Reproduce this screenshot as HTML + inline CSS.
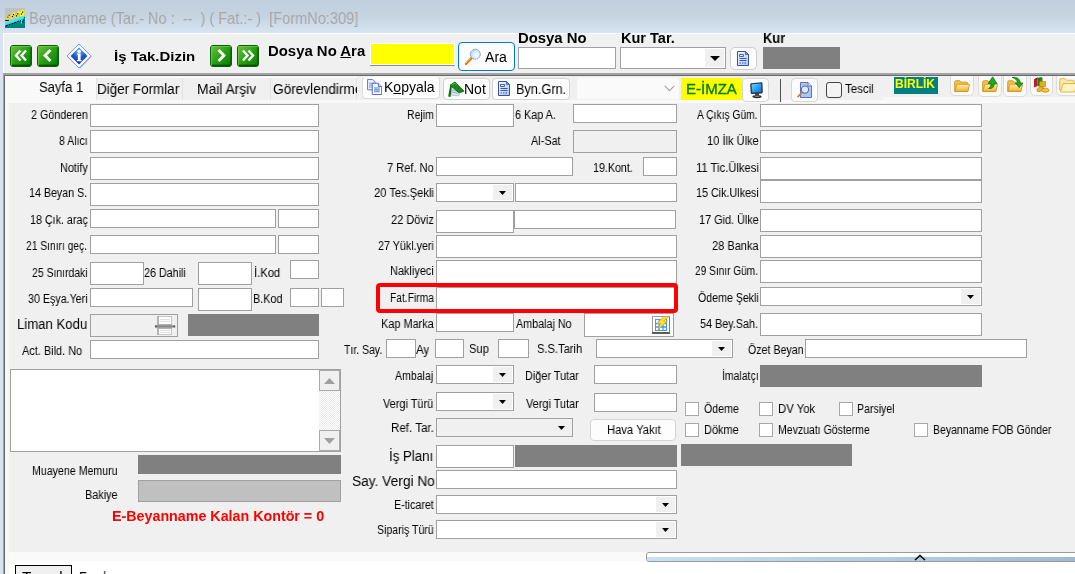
<!DOCTYPE html>
<html lang="tr"><head><meta charset="utf-8"><title>Beyanname</title><style>
html,body{margin:0;padding:0;}
body{width:1075px;height:574px;overflow:hidden;position:relative;background:#f0f0f0;font-family:"Liberation Sans", sans-serif;}
.b{position:absolute;box-sizing:border-box;}
.r{position:absolute;}
.t{position:absolute;white-space:nowrap;transform-origin:0 0;will-change:transform;}
u{text-decoration:underline;}
</style></head><body>
<div class="r" style="left:0px;top:0px;width:1075px;height:33px;background:linear-gradient(#c1cfde 0%,#c5d3e1 45%,#d7e4f1 100%);"></div>
<div class="r" style="left:0px;top:33px;width:3px;height:541px;background:#d7e3f1;"></div>
<div class="r" style="left:3px;top:33px;width:1072px;height:1px;background:#ffffff;"></div>
<div class="r" style="left:3px;top:33px;width:1px;height:40px;background:#ffffff;"></div>
<svg class="r" style="left:5px;top:8px" width="20" height="20" viewBox="0 0 20 20">
<rect width="20" height="20" fill="#c0c0c0"/>
<path d="M0 15.4L20 7.7V20H0Z" fill="#00ffff"/>
<path d="M0 17.5L15.8 12V15.5L17.2 15.8V11.5L20 10.6V20H0Z" fill="#008080"/>
<path d="M.6 11.8L3.4 6.6H5.6L3.2 11.6Z M5.2 10.6L8 4.4H10.4L7.4 11Z M10 9.6L13 3.2H15.4L12.2 9.8Z M14.6 8L15.8 3Q16.4 1.6 18 1.8L19.4 2.6V7L17.4 8.6Z" fill="#ffff00"/>
<path d="M.2 12.4H3.8" stroke="#000" stroke-width="1"/>
<path d="M2.6 9.8L4.8 6.2M7 9.2L9.2 5.4M11.4 8.4L13.6 4.4M16.2 6.6L18.2 3.2" stroke="#000" stroke-width="1.1" stroke-dasharray="1.3 1"/>
<path d="M1 17.8L16 12.4" stroke="#000" stroke-width="1" stroke-dasharray="1.6 1.4"/>
<path d="M17.4 14.6L19.6 9.4" stroke="#000" stroke-width="1.1" stroke-dasharray="1.4 1"/>
</svg>
<svg class="r" style="left:10px;top:45px" width="22" height="22" viewBox="0 0 22 22">
<defs><linearGradient id="gll" x1="0" y1="0" x2="1" y2="1"><stop offset="0" stop-color="#6cc63c"/><stop offset=".5" stop-color="#2a9f14"/><stop offset="1" stop-color="#067a06"/></linearGradient></defs>
<rect x=".5" y=".5" width="21" height="21" rx="2.5" fill="url(#gll)" stroke="#0b5f0b"/>
<path d="M1.5 20.5V2.5Q1.5 1.5 2.5 1.5H20.5" stroke="#7fd45a" stroke-opacity=".6" fill="none"/>
<path d="M2 20.3H20" stroke="#024602" stroke-opacity=".75" stroke-width="1.4"/><path d="M20.4 3V20" stroke="#045804" stroke-opacity=".6"/>
<path d="M10.5 6L6 11L10.5 16 M16 6L11.5 11L16 16" stroke="#fff" stroke-width="2.4" fill="none" stroke-linejoin="miter" transform="translate(0 -.5)"/>
</svg>
<svg class="r" style="left:37px;top:45px" width="22" height="22" viewBox="0 0 22 22">
<defs><linearGradient id="gl" x1="0" y1="0" x2="1" y2="1"><stop offset="0" stop-color="#6cc63c"/><stop offset=".5" stop-color="#2a9f14"/><stop offset="1" stop-color="#067a06"/></linearGradient></defs>
<rect x=".5" y=".5" width="21" height="21" rx="2.5" fill="url(#gl)" stroke="#0b5f0b"/>
<path d="M1.5 20.5V2.5Q1.5 1.5 2.5 1.5H20.5" stroke="#7fd45a" stroke-opacity=".6" fill="none"/>
<path d="M2 20.3H20" stroke="#024602" stroke-opacity=".75" stroke-width="1.4"/><path d="M20.4 3V20" stroke="#045804" stroke-opacity=".6"/>
<path d="M13.5 5.5L8 11L13.5 16.5" stroke="#fff" stroke-width="2.8" fill="none" stroke-linejoin="miter" transform="translate(0 -.5)"/>
</svg>
<svg class="r" style="left:210px;top:45px" width="22" height="22" viewBox="0 0 22 22">
<defs><linearGradient id="gr" x1="0" y1="0" x2="1" y2="1"><stop offset="0" stop-color="#6cc63c"/><stop offset=".5" stop-color="#2a9f14"/><stop offset="1" stop-color="#067a06"/></linearGradient></defs>
<rect x=".5" y=".5" width="21" height="21" rx="2.5" fill="url(#gr)" stroke="#0b5f0b"/>
<path d="M1.5 20.5V2.5Q1.5 1.5 2.5 1.5H20.5" stroke="#7fd45a" stroke-opacity=".6" fill="none"/>
<path d="M2 20.3H20" stroke="#024602" stroke-opacity=".75" stroke-width="1.4"/><path d="M20.4 3V20" stroke="#045804" stroke-opacity=".6"/>
<path d="M8.5 5.5L14 11L8.5 16.5" stroke="#fff" stroke-width="2.8" fill="none" stroke-linejoin="miter" transform="translate(0 -.5)"/>
</svg>
<svg class="r" style="left:237px;top:45px" width="22" height="22" viewBox="0 0 22 22">
<defs><linearGradient id="grr" x1="0" y1="0" x2="1" y2="1"><stop offset="0" stop-color="#6cc63c"/><stop offset=".5" stop-color="#2a9f14"/><stop offset="1" stop-color="#067a06"/></linearGradient></defs>
<rect x=".5" y=".5" width="21" height="21" rx="2.5" fill="url(#grr)" stroke="#0b5f0b"/>
<path d="M1.5 20.5V2.5Q1.5 1.5 2.5 1.5H20.5" stroke="#7fd45a" stroke-opacity=".6" fill="none"/>
<path d="M2 20.3H20" stroke="#024602" stroke-opacity=".75" stroke-width="1.4"/><path d="M20.4 3V20" stroke="#045804" stroke-opacity=".6"/>
<path d="M6 6L10.5 11L6 16 M11.5 6L16 11L11.5 16" stroke="#fff" stroke-width="2.4" fill="none" stroke-linejoin="miter" transform="translate(0 -.5)"/>
</svg>
<svg class="r" style="left:66px;top:43px" width="26" height="26" viewBox="0 0 26 26">
<defs><radialGradient id="gi" cx=".5" cy=".25" r=".75"><stop offset="0" stop-color="#6fb4fa"/><stop offset=".45" stop-color="#1f5fd0"/><stop offset="1" stop-color="#0a2c96"/></radialGradient></defs>
<path d="M13 1.4L24.9 13.2L13.4 24.9L1.6 13.2Z" fill="#b9b9c4" transform="translate(.7 .9)"/>
<path d="M13 .9L25.1 13L13 25.1L.9 13Z" fill="#ffffff" stroke="#6d8ad8" stroke-width=".9"/>
<path d="M13 4.6L21.4 13L13 21.4L4.6 13Z" fill="url(#gi)"/>
<circle cx="13.1" cy="8.2" r="1.75" fill="#fff"/><path d="M10.9 10.6H14.6V17H15.6V18.2H10.9V17H11.9V11.8H10.9Z" fill="#fff"/>
</svg>
<div class="r" style="left:370px;top:43px;width:85px;height:22px;background:#ffffff;"></div>
<div class="r" style="left:371px;top:44px;width:83px;height:20px;background:#ffff00;"></div>
<div class="r" style="left:370px;top:65px;width:85px;height:1px;background:#8e8e8e;"></div>
<div class="b" style="left:458px;top:42px;width:57px;height:29px;background:#fdfdfd;border:1px solid #0078d7;border-radius:4px;"></div>
<svg class="r" style="left:464px;top:47px" width="19" height="19" viewBox="0 0 19 19">
<defs><radialGradient id="glens" cx=".6" cy=".6" r=".7"><stop offset="0" stop-color="#ffffff"/><stop offset=".6" stop-color="#cfe8fb"/><stop offset="1" stop-color="#8fc4f0"/></radialGradient></defs>
<path d="M2 16.8L7.4 11.2" stroke="#e07808" stroke-width="2.4" stroke-linecap="round"/>
<path d="M1.8 16.2L6.8 11" stroke="#ffb050" stroke-width=".9" stroke-linecap="round"/>
<circle cx="11.3" cy="7.2" r="5" fill="url(#glens)" stroke="#8a8ec8" stroke-width="1" stroke-dasharray="1.6 .7"/>
</svg>
<div class="b" style="left:518px;top:47px;width:98px;height:22px;background:#fff;border:1px solid #a0a0a0;"></div>
<div class="b" style="left:620px;top:47px;width:106px;height:22px;background:#fff;border:1px solid #a0a0a0;"></div>
<div class="r" style="left:705px;top:49px;width:19px;height:18px;background:#f0f0f0;"></div>
<svg class="r" style="left:709.5px;top:56.0px" width="10" height="5" viewBox="0 0 10 5"><path d="M0 0H10L5.0 5Z" fill="#000"/></svg>
<div class="b" style="left:730px;top:47px;width:27px;height:23px;background:#fcfcfc;border:1px solid #cfcfcf;border-radius:5px;"></div>
<svg class="r" style="left:737px;top:51px" width="12" height="15" viewBox="0 0 12 15">
<defs><linearGradient id="gdoc" x1="0" y1="0" x2="1" y2="1"><stop offset="0" stop-color="#f2f8ff"/><stop offset=".5" stop-color="#cfe4fb"/><stop offset="1" stop-color="#9ccaf6"/></linearGradient></defs>
<path d="M.5 .5H8.5L11.5 3.5V14.5H.5Z" fill="url(#gdoc)" stroke="#3f4f9e"/>
<path d="M8.5 .5V3.5H11.5Z" fill="#5aa8f0" stroke="#3f4f9e" stroke-width=".8"/>
<path d="M2.5 3.5H6.5V5.5H2.5Z" fill="none" stroke="#3b50a8" stroke-width=".9"/>
<path d="M2.5 7.5H9.5M2.5 9.5H9.5" stroke="#3b50a8"/><path d="M2.5 12H9.5" stroke="#3b50a8" stroke-dasharray="1.5 1"/>
</svg>
<div class="r" style="left:763px;top:47px;width:77px;height:22px;background:#808080;"></div>
<div class="r" style="left:3px;top:73px;width:1072px;height:2px;background:#a3a3a3;"></div>
<div class="r" style="left:4px;top:75px;width:1071px;height:1px;background:#696969;"></div>
<div class="r" style="left:3px;top:73px;width:1px;height:501px;background:#a3a3a3;"></div>
<div class="r" style="left:4px;top:75px;width:1px;height:499px;background:#696969;"></div>
<div class="r" style="left:5px;top:76px;width:4px;height:498px;background:#f8f8f8;"></div>
<div class="r" style="left:5px;top:76px;width:352px;height:24px;background:#f9f9f9;"></div>
<div class="r" style="left:5px;top:100px;width:1070px;height:3px;background:#f9f9f9;"></div>
<div class="r" style="left:883px;top:97px;width:192px;height:3px;background:#f8f8f8;"></div>
<div class="r" style="left:96px;top:78px;width:86px;height:22px;background:#f0f0f0;border-left:1px solid #e3e3e3;box-sizing:border-box;"></div>
<div class="r" style="left:182px;top:78px;width:88px;height:22px;background:#f0f0f0;border-left:1px solid #e3e3e3;box-sizing:border-box;"></div>
<div class="r" style="left:270px;top:78px;width:86px;height:22px;background:#f0f0f0;border-left:1px solid #e3e3e3;box-sizing:border-box;"></div>
<div class="r" style="left:356px;top:78px;width:1px;height:22px;background:#e3e3e3;"></div>
<div class="b" style="left:362px;top:76px;width:78px;height:23px;background:#fdfdfd;border:1px solid #dcdcdc;border-radius:4px;border-top-color:#f4f4f4;"></div>
<svg class="r" style="left:367px;top:79px" width="15.2" height="16" viewBox="0 0 16 17">
<path d="M.5 .5H6L8.5 3V11.5H.5Z" fill="#e6effc" stroke="#5a72c0"/>
<path d="M2 4.5H7M2 6.5H7M2 8.5H7" stroke="#7d9be0"/>
<path d="M5.5 4.5H12L15.5 8V16.5H5.5Z" fill="#fff" stroke="#4a62b8"/>
<path d="M12 4.5V8H15.5" fill="#dbe6fa" stroke="#4a62b8"/>
<path d="M7.5 9.5H13.5M7.5 11.5H13.5M7.5 13.5H13.5" stroke="#3f7fe8" stroke-width="1.2"/>
</svg>
<div class="b" style="left:443px;top:78px;width:47px;height:22px;background:#fdfdfd;border:1px solid #d2d2d2;border-radius:4px;"></div>
<svg class="r" style="left:447px;top:81px" width="18" height="17" viewBox="0 0 18 17">
<path d="M4 6L12 8V15L4 14Z" fill="#dbe7f5" stroke="#9fb4cc" stroke-width=".7"/>
<path d="M5 9L11 10.3M5 11L11 12.3" stroke="#7fa0d0" stroke-width=".8"/>
<path d="M1.2 15.5L3.2 4.5L4.8 5L3.6 16Z" fill="#0d6a0d"/>
<path d="M3 4.2L8 1L17 10.2L12 11.8Z" fill="#138a13" stroke="#0a5c0a" stroke-width=".8"/>
<path d="M4.5 4.4L8 2.2L10 4.2" stroke="#56c040" stroke-width=".9" fill="none"/>
</svg>
<div class="b" style="left:492px;top:78px;width:78px;height:22px;background:#fdfdfd;border:1px solid #d2d2d2;border-radius:4px;"></div>
<svg class="r" style="left:498px;top:81px" width="12" height="15" viewBox="0 0 12 15">
<defs><linearGradient id="gdoc" x1="0" y1="0" x2="1" y2="1"><stop offset="0" stop-color="#f2f8ff"/><stop offset=".5" stop-color="#cfe4fb"/><stop offset="1" stop-color="#9ccaf6"/></linearGradient></defs>
<path d="M.5 .5H8.5L11.5 3.5V14.5H.5Z" fill="url(#gdoc)" stroke="#3f4f9e"/>
<path d="M8.5 .5V3.5H11.5Z" fill="#5aa8f0" stroke="#3f4f9e" stroke-width=".8"/>
<path d="M2.5 3.5H6.5V5.5H2.5Z" fill="none" stroke="#3b50a8" stroke-width=".9"/>
<path d="M2.5 7.5H9.5M2.5 9.5H9.5" stroke="#3b50a8"/><path d="M2.5 12H9.5" stroke="#3b50a8" stroke-dasharray="1.5 1"/>
</svg>
<div class="b" style="left:576px;top:77px;width:104px;height:23px;background:#fafafa;border:1px solid #f0f0f0;"></div>
<svg class="r" style="left:664px;top:85px" width="11" height="7" viewBox="0 0 11 7"><path d="M.7 .8L5.5 5.6L10.3 .8" stroke="#a6a6a6" stroke-width="1.1" fill="none"/></svg>
<div class="r" style="left:681px;top:78px;width:61px;height:22px;background:#ffff00;"></div>
<div class="b" style="left:742px;top:78px;width:27px;height:24px;background:#fcfcfc;border:1px solid #d6d6d6;border-radius:4px;"></div>
<svg class="r" style="left:749px;top:82px" width="15" height="17" viewBox="0 0 15 17">
<defs><linearGradient id="gmon" x1="0" y1="0" x2="1" y2="1"><stop offset="0" stop-color="#6fd2ff"/><stop offset=".5" stop-color="#2aa4f8"/><stop offset="1" stop-color="#0c6edc"/></linearGradient></defs>
<ellipse cx="8" cy="14.6" rx="4.6" ry="1.7" fill="#2c2c2c"/><ellipse cx="8" cy="14.2" rx="2.6" ry=".8" fill="#8a8a8a"/>
<path d="M6 10.5H10V14H6Z" fill="#4a4a4a"/>
<path d="M1.2 2.6Q1 1.4 2.2 1.2L12 .3Q13.4 .2 13.5 1.5L13.8 10Q13.8 11.3 12.6 11.4L3 12Q1.8 12 1.7 10.8Z" fill="#33363c"/>
<path d="M2.6 3Q2.5 2.4 3.2 2.3L11.4 1.6Q12.1 1.6 12.2 2.2L12.4 9.3Q12.4 9.9 11.8 10L3.7 10.5Q3 10.5 3 9.9Z" fill="url(#gmon)"/>
</svg>
<div class="r" style="left:780px;top:79px;width:1px;height:23px;background:#505050;"></div>
<div class="b" style="left:791px;top:78px;width:27px;height:24px;background:#fcfcfc;border:1px solid #d6d6d6;border-radius:4px;"></div>
<svg class="r" style="left:797px;top:82px" width="16" height="16" viewBox="0 0 16 16">
<path d="M3.5 .5H11L14.5 4V15.5H3.5Z" fill="#a9c6f5" stroke="#5a6fd0"/>
<path d="M11 .5V4H14.5" fill="#e8f0fd" stroke="#5a6fd0"/>
<path d="M1 14.6L5.2 10.4" stroke="#d08020" stroke-width="1.8" stroke-linecap="round"/>
<circle cx="8" cy="7.6" r="3.6" fill="#e9f2fd" fill-opacity=".85" stroke="#5f6f98" stroke-width="1.1"/>
</svg>
<div class="b" style="left:826px;top:82px;width:16px;height:16px;background:#f4f4f4;border:1px solid #444;border-radius:3px;"></div>
<div class="r" style="left:894px;top:77px;width:44px;height:17px;background:#008080;"></div>
<div class="b" style="left:950px;top:66px;width:24px;height:30px;background:#fafafa;border:1px solid #dcdcdc;border-radius:5px;"></div>
<svg class="r" style="left:954px;top:80px;overflow:visible" width="16" height="12" viewBox="0 0 16 12"><defs><linearGradient id="gf" x1="0" y1="0" x2="0" y2="1"><stop offset="0" stop-color="#fdf0b8"/><stop offset="1" stop-color="#f0b432"/></linearGradient></defs>
<path d="M.7 11.3V2.2Q.7 .7 2.2 .7H5.8L7.2 2.2H12.6Q13.8 2.2 13.8 3.6V11.3Z" fill="#f3c24a" stroke="#d49416" stroke-width=".9"/>
<path d="M.9 11.4L2.6 4.8Q2.8 4.2 3.6 4.2H14.8Q15.6 4.2 15.4 5L13.8 11.4Z" fill="url(#gf)" stroke="#d49416" stroke-width=".9"/></svg>
<div class="b" style="left:978px;top:66px;width:24px;height:31px;background:#fafafa;border:1px solid #dcdcdc;border-radius:5px;"></div>
<svg class="r" style="left:982px;top:80px;overflow:visible" width="16" height="12" viewBox="0 0 16 12"><defs><linearGradient id="gf" x1="0" y1="0" x2="0" y2="1"><stop offset="0" stop-color="#fdf0b8"/><stop offset="1" stop-color="#f0b432"/></linearGradient></defs>
<path d="M.7 11.3V2.2Q.7 .7 2.2 .7H5.8L7.2 2.2H12.6Q13.8 2.2 13.8 3.6V11.3Z" fill="#f3c24a" stroke="#d49416" stroke-width=".9"/>
<path d="M.9 11.4L2.6 4.8Q2.8 4.2 3.6 4.2H14.8Q15.6 4.2 15.4 5L13.8 11.4Z" fill="url(#gf)" stroke="#d49416" stroke-width=".9"/><path d="M6.5 8.5Q9.5 7.5 9 3.5H6.2L10.6 -3.2L15 3.5H12.2Q12.4 9 6.5 8.5Z" fill="#1faa1f" stroke="#0b6e0b" stroke-width=".7"/></svg>
<div class="b" style="left:1003px;top:66px;width:24px;height:31px;background:#fafafa;border:1px solid #dcdcdc;border-radius:5px;"></div>
<svg class="r" style="left:1007px;top:80px;overflow:visible" width="16" height="12" viewBox="0 0 16 12"><defs><linearGradient id="gf" x1="0" y1="0" x2="0" y2="1"><stop offset="0" stop-color="#fdf0b8"/><stop offset="1" stop-color="#f0b432"/></linearGradient></defs>
<path d="M.7 11.3V2.2Q.7 .7 2.2 .7H5.8L7.2 2.2H12.6Q13.8 2.2 13.8 3.6V11.3Z" fill="#f3c24a" stroke="#d49416" stroke-width=".9"/>
<path d="M.9 11.4L2.6 4.8Q2.8 4.2 3.6 4.2H14.8Q15.6 4.2 15.4 5L13.8 11.4Z" fill="url(#gf)" stroke="#d49416" stroke-width=".9"/><path d="M5 -2.6Q12.6 -3.6 13.4 3H16L12.2 7.6L8.4 3H10.8Q10 -1.4 5 -2.6Z" fill="#1faa1f" stroke="#0b6e0b" stroke-width=".7"/></svg>
<div class="b" style="left:1030px;top:66px;width:23px;height:30px;background:#fafafa;border:1px solid #dcdcdc;border-radius:5px;"></div>
<svg class="r" style="left:1033px;top:77px" width="17" height="16" viewBox="0 0 17 16">
<path d="M1 2.5L4.5 .5V9L1 10.5Z" fill="#c81818"/><path d="M1 2.5L4.5 .5V2.5Z" fill="#8a0c0c"/>
<path d="M4.5 .8L8.5 0L9.5 1V8.5L4.5 9.5Z" fill="#1c8c1c"/><path d="M6 1V9" stroke="#0c5c0c" stroke-width=".7"/>
<path d="M6.5 4.5H12.5V9.5H6.5Z" fill="#e9a820" stroke="#b47a0c" stroke-width=".6"/>
<ellipse cx="7.2" cy="12.2" rx="3.6" ry="1.9" fill="#f2b828" stroke="#a8700a" stroke-width=".6" transform="rotate(-28 7.2 12.2)"/>
<ellipse cx="12.3" cy="13.2" rx="3.8" ry="2" fill="#f6c838" stroke="#a8700a" stroke-width=".6"/>
</svg>
<div class="b" style="left:1056px;top:66px;width:25px;height:30px;background:#fafafa;border:1px solid #dcdcdc;border-radius:5px;"></div>
<svg class="r" style="left:1059px;top:78px" width="18" height="15" viewBox="0 0 18 15">
<path d="M.7 12V2.2Q.7 .7 2.2 .7H6L7.5 2.2H14Q15.2 2.2 15.2 3.6V12Z" fill="#fbe9a4" stroke="#e0b040" stroke-width=".9"/>
<path d="M1.5 14L4 5.5H18L15.5 14Z" fill="#fdf3c4" stroke="#e0b040" stroke-width=".9"/>
</svg>
<div class="r" style="left:940px;top:60px;width:135px;height:13px;background:#f0f0f0;"></div>
<div class="r" style="left:940px;top:73px;width:135px;height:2px;background:#a3a3a3;"></div>
<div class="r" style="left:940px;top:75px;width:135px;height:1px;background:#696969;"></div>
<div class="b" style="left:90px;top:104px;width:229px;height:23px;background:#fff;border:1px solid #a0a0a0;"></div>
<div class="b" style="left:90px;top:130px;width:229px;height:23px;background:#fff;border:1px solid #a0a0a0;"></div>
<div class="b" style="left:90px;top:157px;width:229px;height:23px;background:#fff;border:1px solid #a0a0a0;"></div>
<div class="b" style="left:90px;top:183px;width:229px;height:23px;background:#fff;border:1px solid #a0a0a0;"></div>
<div class="b" style="left:90px;top:209px;width:186px;height:19px;background:#fff;border:1px solid #a0a0a0;"></div>
<div class="b" style="left:278px;top:209px;width:41px;height:19px;background:#fff;border:1px solid #a0a0a0;"></div>
<div class="b" style="left:90px;top:235px;width:186px;height:19px;background:#fff;border:1px solid #a0a0a0;"></div>
<div class="b" style="left:278px;top:235px;width:41px;height:19px;background:#fff;border:1px solid #a0a0a0;"></div>
<div class="b" style="left:90px;top:262px;width:54px;height:23px;background:#fff;border:1px solid #a0a0a0;"></div>
<div class="b" style="left:198px;top:262px;width:54px;height:23px;background:#fff;border:1px solid #a0a0a0;"></div>
<div class="b" style="left:290px;top:260px;width:29px;height:19px;background:#fff;border:1px solid #a0a0a0;"></div>
<div class="b" style="left:90px;top:288px;width:103px;height:19px;background:#fff;border:1px solid #a0a0a0;"></div>
<div class="b" style="left:198px;top:288px;width:54px;height:23px;background:#fff;border:1px solid #a0a0a0;"></div>
<div class="b" style="left:290px;top:288px;width:29px;height:19px;background:#fff;border:1px solid #a0a0a0;"></div>
<div class="b" style="left:321px;top:288px;width:23px;height:19px;background:#fff;border:1px solid #a0a0a0;"></div>
<div class="b" style="left:90px;top:314px;width:88px;height:23px;background:#f0f0f0;border:1px solid #a0a0a0;"></div>
<svg class="r" style="left:154px;top:316px" width="22" height="19" viewBox="0 0 22 19">
<rect x="3.5" y=".5" width="14" height="18" fill="#fbfbfb" stroke="#c6c6c6"/>
<path d="M4 0V19" stroke="#b2b2b2" stroke-width="2"/>
<path d="M6 3.5H16M6 5.5H16M6 14.5H16M6 16.5H16" stroke="#e2e2e2"/>
<rect x="3" y="8" width="15" height="5" fill="#b0b0b0"/>
<rect x="2" y="9.3" width="18" height="2.2" fill="#8c8c8c"/>
<rect x="1" y="9.3" width="1.6" height="2.2" fill="#555"/><rect x="19.6" y="9.3" width="1.6" height="2.2" fill="#555"/>
</svg>
<div class="r" style="left:188px;top:314px;width:131px;height:22px;background:#808080;"></div>
<div class="b" style="left:90px;top:340px;width:229px;height:19px;background:#fff;border:1px solid #a0a0a0;"></div>
<div class="b" style="left:10px;top:369px;width:331px;height:83px;background:#fff;border:1px solid #a0a0a0;"></div>
<div class="r" style="left:319px;top:370px;width:21px;height:81px;background:repeating-conic-gradient(#ffffff 0% 25%, #e9e9e9 0% 50%) 0 0/2px 2px;"></div>
<div class="b" style="left:319px;top:370px;width:21px;height:21px;background:#f0f0f0;border:1px solid #a9a9a9;"></div>
<div class="b" style="left:319px;top:430px;width:21px;height:21px;background:#f0f0f0;border:1px solid #a9a9a9;"></div>
<svg class="r" style="left:324px;top:378px" width="11" height="6" viewBox="0 0 11 6"><path d="M0 6H11L5.5 0Z" fill="#a0a0a0"/></svg>
<svg class="r" style="left:324px;top:438px" width="11" height="6" viewBox="0 0 11 6"><path d="M0 0H11L5.5 6Z" fill="#a0a0a0"/></svg>
<div class="r" style="left:138px;top:455px;width:203px;height:19px;background:#808080;"></div>
<div class="b" style="left:138px;top:480px;width:203px;height:22px;background:#c0c0c0;border:1px solid #a0a0a0;"></div>
<div class="b" style="left:436px;top:104px;width:78px;height:23px;background:#fff;border:1px solid #a0a0a0;"></div>
<div class="b" style="left:573px;top:104px;width:104px;height:19px;background:#fff;border:1px solid #a0a0a0;"></div>
<div class="b" style="left:573px;top:130px;width:104px;height:23px;background:#f0f0f0;border:1px solid #a0a0a0;"></div>
<div class="b" style="left:436px;top:157px;width:137px;height:19px;background:#fff;border:1px solid #a0a0a0;"></div>
<div class="b" style="left:643px;top:157px;width:34px;height:19px;background:#fff;border:1px solid #a0a0a0;"></div>
<div class="b" style="left:436px;top:183px;width:78px;height:19px;background:#fff;border:1px solid #a0a0a0;"></div>
<div class="r" style="left:493px;top:185px;width:19px;height:15px;background:#f0f0f0;"></div>
<svg class="r" style="left:499.0px;top:191.0px" width="7" height="4" viewBox="0 0 7 4"><path d="M0 0H7L3.5 4Z" fill="#000"/></svg>
<div class="b" style="left:515px;top:183px;width:162px;height:19px;background:#fff;border:1px solid #a0a0a0;"></div>
<div class="b" style="left:514px;top:210px;width:162px;height:19px;background:#fff;border:1px solid #a0a0a0;"></div>
<div class="b" style="left:436px;top:210px;width:78px;height:23px;background:#fff;border:1px solid #a0a0a0;"></div>
<div class="b" style="left:436px;top:235px;width:241px;height:23px;background:#fff;border:1px solid #a0a0a0;"></div>
<div class="b" style="left:436px;top:260px;width:241px;height:24px;background:#fff;border:1px solid #a0a0a0;"></div>
<div class="b" style="left:436px;top:287px;width:241px;height:23px;background:#fff;border:1px solid #a0a0a0;"></div>
<div class="b" style="left:375.5px;top:282.5px;width:302px;height:30px;border:4px solid #ff0000;border-radius:4px;"></div>
<div class="b" style="left:436px;top:313px;width:78px;height:19px;background:#fff;border:1px solid #a0a0a0;"></div>
<div class="b" style="left:584px;top:313px;width:90px;height:24px;background:#fff;border:1px solid #a0a0a0;"></div>
<svg class="r" style="left:652px;top:316px" width="18" height="18" viewBox="0 0 18 18">
<rect x=".5" y=".5" width="17" height="17" fill="#fff" stroke="#9c9c9c"/>
<path d="M0 17H18" stroke="#5c5c54" stroke-width="2"/><path d="M17.5 1V17" stroke="#7c7c7c"/>
<rect x="3.5" y="3.5" width="11" height="11" fill="#fff" stroke="#3a9aff"/>
<path d="M3 7.5H15M3 11H15M7.2 3V15M11 3V15" stroke="#3a9aff" stroke-width="1.3"/>
<path d="M11.5 .6L5.4 7.4H8.6L6 13.4L15.4 5.2H11.6L16.6 .6Z" fill="#ffe61e" stroke="#e89a28" stroke-width=".8"/>
</svg>
<div class="b" style="left:386px;top:339px;width:30px;height:19px;background:#fff;border:1px solid #a0a0a0;"></div>
<div class="b" style="left:435px;top:339px;width:29px;height:19px;background:#fff;border:1px solid #a0a0a0;"></div>
<div class="b" style="left:498px;top:339px;width:31px;height:19px;background:#fff;border:1px solid #a0a0a0;"></div>
<div class="b" style="left:596px;top:339px;width:137px;height:19px;background:#fff;border:1px solid #a0a0a0;"></div>
<div class="r" style="left:712px;top:341px;width:19px;height:15px;background:#f0f0f0;"></div>
<svg class="r" style="left:718.0px;top:347.0px" width="7" height="4" viewBox="0 0 7 4"><path d="M0 0H7L3.5 4Z" fill="#000"/></svg>
<div class="b" style="left:436px;top:365px;width:78px;height:19px;background:#fff;border:1px solid #a0a0a0;"></div>
<div class="r" style="left:493px;top:367px;width:19px;height:15px;background:#f0f0f0;"></div>
<svg class="r" style="left:499.0px;top:373.0px" width="7" height="4" viewBox="0 0 7 4"><path d="M0 0H7L3.5 4Z" fill="#000"/></svg>
<div class="b" style="left:594px;top:365px;width:83px;height:19px;background:#fff;border:1px solid #a0a0a0;"></div>
<div class="b" style="left:436px;top:392px;width:78px;height:19px;background:#fff;border:1px solid #a0a0a0;"></div>
<div class="r" style="left:493px;top:394px;width:19px;height:15px;background:#f0f0f0;"></div>
<svg class="r" style="left:499.0px;top:400.0px" width="7" height="4" viewBox="0 0 7 4"><path d="M0 0H7L3.5 4Z" fill="#000"/></svg>
<div class="b" style="left:594px;top:393px;width:83px;height:19px;background:#fff;border:1px solid #a0a0a0;"></div>
<div class="b" style="left:436px;top:418px;width:137px;height:19px;background:#f0f0f0;border:1px solid #a0a0a0;"></div>
<svg class="r" style="left:558.0px;top:426.0px" width="7" height="4" viewBox="0 0 7 4"><path d="M0 0H7L3.5 4Z" fill="#000"/></svg>
<div class="b" style="left:590px;top:419px;width:86px;height:22px;background:#fdfdfd;border:1px solid #d4d4d4;border-radius:4px;"></div>
<div class="b" style="left:436px;top:445px;width:78px;height:23px;background:#fff;border:1px solid #a0a0a0;"></div>
<div class="r" style="left:515px;top:445px;width:162px;height:22px;background:#808080;"></div>
<div class="b" style="left:436px;top:470px;width:241px;height:19px;background:#fff;border:1px solid #a0a0a0;"></div>
<div class="b" style="left:436px;top:495px;width:241px;height:19px;background:#fff;border:1px solid #a0a0a0;"></div>
<div class="r" style="left:656px;top:497px;width:19px;height:15px;background:#f0f0f0;"></div>
<svg class="r" style="left:662.0px;top:503.0px" width="7" height="4" viewBox="0 0 7 4"><path d="M0 0H7L3.5 4Z" fill="#000"/></svg>
<div class="b" style="left:436px;top:520px;width:241px;height:19px;background:#fff;border:1px solid #a0a0a0;"></div>
<div class="r" style="left:656px;top:522px;width:19px;height:15px;background:#f0f0f0;"></div>
<svg class="r" style="left:662.0px;top:528.0px" width="7" height="4" viewBox="0 0 7 4"><path d="M0 0H7L3.5 4Z" fill="#000"/></svg>
<div class="b" style="left:760px;top:104px;width:222px;height:23px;background:#fff;border:1px solid #a0a0a0;"></div>
<div class="b" style="left:760px;top:130px;width:222px;height:23px;background:#fff;border:1px solid #a0a0a0;"></div>
<div class="b" style="left:760px;top:157px;width:222px;height:23px;background:#fff;border:1px solid #a0a0a0;"></div>
<div class="b" style="left:760px;top:180px;width:222px;height:23px;background:#fff;border:1px solid #a0a0a0;"></div>
<div class="b" style="left:760px;top:209px;width:222px;height:23px;background:#fff;border:1px solid #a0a0a0;"></div>
<div class="b" style="left:760px;top:235px;width:222px;height:23px;background:#fff;border:1px solid #a0a0a0;"></div>
<div class="b" style="left:760px;top:260px;width:222px;height:23px;background:#fff;border:1px solid #a0a0a0;"></div>
<div class="b" style="left:760px;top:287px;width:222px;height:19px;background:#fff;border:1px solid #a0a0a0;"></div>
<div class="r" style="left:961px;top:289px;width:19px;height:15px;background:#f0f0f0;"></div>
<svg class="r" style="left:967.0px;top:295.0px" width="7" height="4" viewBox="0 0 7 4"><path d="M0 0H7L3.5 4Z" fill="#000"/></svg>
<div class="b" style="left:760px;top:313px;width:222px;height:23px;background:#fff;border:1px solid #a0a0a0;"></div>
<div class="b" style="left:805px;top:339px;width:222px;height:19px;background:#fff;border:1px solid #a0a0a0;"></div>
<div class="r" style="left:760px;top:365px;width:222px;height:22px;background:#808080;"></div>
<div class="b" style="left:685px;top:402px;width:14px;height:14px;background:#fff;border:1px solid #a8a8a8;"></div>
<div class="b" style="left:759px;top:402px;width:14px;height:14px;background:#fff;border:1px solid #a8a8a8;"></div>
<div class="b" style="left:839px;top:402px;width:14px;height:14px;background:#fff;border:1px solid #a8a8a8;"></div>
<div class="b" style="left:685px;top:423px;width:14px;height:14px;background:#fff;border:1px solid #a8a8a8;"></div>
<div class="b" style="left:759px;top:423px;width:14px;height:14px;background:#fff;border:1px solid #a8a8a8;"></div>
<div class="b" style="left:914px;top:423px;width:14px;height:14px;background:#fff;border:1px solid #a8a8a8;"></div>
<div class="r" style="left:681px;top:444px;width:171px;height:22px;background:#808080;"></div>
<div class="r" style="left:9px;top:552px;width:1066px;height:10px;background:#fafafa;"></div>
<div class="r" style="left:9px;top:562px;width:1066px;height:12px;background:#ffffff;"></div>
<div class="b" style="left:646px;top:552px;width:440px;height:10px;border:1px solid #9a9a9a;border-radius:3px;background:#fff;overflow:hidden;"><div style="position:absolute;left:0;right:0;top:4px;bottom:0;background:linear-gradient(to right,#c9e1f1,#b4cfe3 50%,#9ebad0);"></div></div>
<svg class="r" style="left:914px;top:554px" width="12" height="7" viewBox="0 0 12 7"><path d="M1 6L6 1.5L11 6" stroke="#000" stroke-width="1.6" fill="none"/></svg>
<div class="b" style="left:15px;top:565px;width:57px;height:20px;border:1px solid #000;background:#f0f0f0;"></div>
<span class="t" style="left:29.4px;top:8px;font-size:16px;line-height:21px;font-weight:normal;color:#a6a6a6;transform:scaleX(0.9097);">Beyanname (Tar.- No :&nbsp; --&nbsp; ) ( Fat.:- )&nbsp; [FormNo:309]</span>
<span class="t" style="left:114.4px;top:48px;font-size:13px;line-height:17px;font-weight:bold;color:#000;transform:scaleX(1.1508);">İş Tak.Dizin</span>
<span class="t" style="left:268.0px;top:42px;font-size:14px;line-height:18px;font-weight:bold;color:#000;transform:scaleX(1.0645);">Dosya No <u>A</u>ra</span>
<span class="t" style="left:484.5px;top:48px;font-size:14px;line-height:18px;font-weight:normal;color:#000;transform:scaleX(1.0047);">Ara</span>
<span class="t" style="left:518.0px;top:29px;font-size:14px;line-height:18px;font-weight:bold;color:#000;transform:scaleX(1.0623);">Dosya No</span>
<span class="t" style="left:620.8px;top:29px;font-size:14px;line-height:18px;font-weight:bold;color:#000;transform:scaleX(1.0371);">Kur Tar.</span>
<span class="t" style="left:762.8px;top:29px;font-size:14px;line-height:18px;font-weight:bold;color:#000;transform:scaleX(0.9202);">Kur</span>
<span class="t" style="left:39.4px;top:78px;font-size:14px;line-height:18px;font-weight:normal;color:#000;transform:scaleX(0.9308);">Sayfa 1</span>
<span class="t" style="left:97.4px;top:80px;font-size:14px;line-height:18px;font-weight:normal;color:#000;transform:scaleX(0.9605);">Diğer Formlar</span>
<span class="t" style="left:197.4px;top:80px;font-size:14px;line-height:18px;font-weight:normal;color:#000;transform:scaleX(0.9882);">Mail Arşiv</span>
<span class="t" style="left:272.8px;top:80px;font-size:14px;line-height:18px;font-weight:normal;color:#000;transform:scaleX(0.9750);width:85.9px;overflow:hidden;">Görevlendirme</span>
<span class="t" style="left:384.0px;top:78px;font-size:14px;line-height:18px;font-weight:normal;color:#000;transform:scaleX(0.9998);">K<u>o</u>pyala</span>
<span class="t" style="left:464.1px;top:80px;font-size:14px;line-height:18px;font-weight:normal;color:#000;transform:scaleX(0.9956);">Not</span>
<span class="t" style="left:516.0px;top:80px;font-size:14px;line-height:18px;font-weight:normal;color:#000;transform:scaleX(0.9086);">Byn.Grn.</span>
<span class="t" style="left:685.8px;top:80px;font-size:14px;line-height:18px;font-weight:normal;color:#008000;transform:scaleX(1.0705);-webkit-text-stroke:.35px #008000;">E-İMZA</span>
<span class="t" style="left:845.3px;top:81px;font-size:12px;line-height:16px;font-weight:normal;color:#000;transform:scaleX(0.9562);">Tescil</span>
<span class="t" style="left:894.9px;top:76px;font-size:12px;line-height:16px;font-weight:bold;color:#ffff00;transform:scaleX(0.9925);">BİRLİK</span>
<span class="t" style="left:30.8px;top:107px;font-size:12px;line-height:16px;font-weight:normal;color:#000;transform:scaleX(0.8960);">2 Gönderen</span>
<span class="t" style="left:58.8px;top:133px;font-size:12px;line-height:16px;font-weight:normal;color:#000;transform:scaleX(0.8811);">8 Alıcı</span>
<span class="t" style="left:59.8px;top:160px;font-size:12px;line-height:16px;font-weight:normal;color:#000;transform:scaleX(0.9059);">Notify</span>
<span class="t" style="left:28.8px;top:185px;font-size:12px;line-height:16px;font-weight:normal;color:#000;transform:scaleX(0.8900);">14 Beyan S.</span>
<span class="t" style="left:29.8px;top:212px;font-size:12px;line-height:16px;font-weight:normal;color:#000;transform:scaleX(0.8933);">18 Çık. araç</span>
<span class="t" style="left:26.0px;top:238px;font-size:12px;line-height:16px;font-weight:normal;color:#000;transform:scaleX(0.8546);">21 Sınırı geç.</span>
<span class="t" style="left:32.0px;top:265px;font-size:12px;line-height:16px;font-weight:normal;color:#000;transform:scaleX(0.8681);">25 Sınırdaki</span>
<span class="t" style="left:143.8px;top:265px;font-size:12px;line-height:16px;font-weight:normal;color:#000;transform:scaleX(0.8950);">26 Dahili</span>
<span class="t" style="left:254.4px;top:265px;font-size:12px;line-height:16px;font-weight:normal;color:#000;transform:scaleX(0.9347);">İ.Kod</span>
<span class="t" style="left:28.0px;top:291px;font-size:12px;line-height:16px;font-weight:normal;color:#000;transform:scaleX(0.8904);">30 Eşya.Yeri</span>
<span class="t" style="left:253.0px;top:291px;font-size:12px;line-height:16px;font-weight:normal;color:#000;transform:scaleX(0.9051);">B.Kod</span>
<span class="t" style="left:16.8px;top:315px;font-size:14px;line-height:18px;font-weight:normal;color:#000;transform:scaleX(0.9395);">Liman Kodu</span>
<span class="t" style="left:22.4px;top:343px;font-size:12px;line-height:16px;font-weight:normal;color:#000;transform:scaleX(0.9117);">Act. Bild. No</span>
<span class="t" style="left:32.0px;top:463px;font-size:12px;line-height:16px;font-weight:normal;color:#000;transform:scaleX(0.8850);">Muayene Memuru</span>
<span class="t" style="left:85.0px;top:487px;font-size:12px;line-height:16px;font-weight:normal;color:#000;transform:scaleX(0.9048);">Bakiye</span>
<span class="t" style="left:111.7px;top:507px;font-size:14px;line-height:18px;font-weight:bold;color:#ff0000;transform:scaleX(1.0191);">E-Beyanname Kalan Kontör = 0</span>
<span class="t" style="left:406.8px;top:107px;font-size:12px;line-height:16px;font-weight:normal;color:#000;transform:scaleX(0.8738);">Rejim</span>
<span class="t" style="left:514.8px;top:107px;font-size:12px;line-height:16px;font-weight:normal;color:#000;transform:scaleX(0.8992);">6 Kap A.</span>
<span class="t" style="left:531.0px;top:133px;font-size:12px;line-height:16px;font-weight:normal;color:#000;transform:scaleX(0.9055);">Al-Sat</span>
<span class="t" style="left:386.8px;top:160px;font-size:12px;line-height:16px;font-weight:normal;color:#000;transform:scaleX(0.9230);">7 Ref. No</span>
<span class="t" style="left:592.8px;top:160px;font-size:12px;line-height:16px;font-weight:normal;color:#000;transform:scaleX(0.8903);">19.Kont.</span>
<span class="t" style="left:373.8px;top:185px;font-size:12px;line-height:16px;font-weight:normal;color:#000;transform:scaleX(0.9274);">20 Tes.Şekli</span>
<span class="t" style="left:390.8px;top:212px;font-size:12px;line-height:16px;font-weight:normal;color:#000;transform:scaleX(0.9167);">22 Döviz</span>
<span class="t" style="left:377.8px;top:238px;font-size:12px;line-height:16px;font-weight:normal;color:#000;transform:scaleX(0.8930);">27 Yükl.yeri</span>
<span class="t" style="left:389.8px;top:263px;font-size:12px;line-height:16px;font-weight:normal;color:#000;transform:scaleX(0.9122);">Nakliyeci</span>
<span class="t" style="left:389.8px;top:290px;font-size:12px;line-height:16px;font-weight:normal;color:#000;transform:scaleX(0.8531);">Fat.Firma</span>
<span class="t" style="left:380.8px;top:316px;font-size:12px;line-height:16px;font-weight:normal;color:#000;transform:scaleX(0.9099);">Kap Marka</span>
<span class="t" style="left:516.0px;top:316px;font-size:12px;line-height:16px;font-weight:normal;color:#000;transform:scaleX(0.8963);">Ambalaj No</span>
<span class="t" style="left:344.0px;top:342px;font-size:12px;line-height:16px;font-weight:normal;color:#000;transform:scaleX(0.8722);">Tır. Say.</span>
<span class="t" style="left:416.4px;top:342px;font-size:12px;line-height:16px;font-weight:normal;color:#000;transform:scaleX(0.9567);">Ay</span>
<span class="t" style="left:468.8px;top:341px;font-size:12px;line-height:16px;font-weight:normal;color:#000;transform:scaleX(0.9270);">Sup</span>
<span class="t" style="left:537.4px;top:341px;font-size:12px;line-height:16px;font-weight:normal;color:#000;transform:scaleX(0.9284);">S.S.Tarih</span>
<span class="t" style="left:395.4px;top:368px;font-size:12px;line-height:16px;font-weight:normal;color:#000;transform:scaleX(0.8810);">Ambalaj</span>
<span class="t" style="left:524.8px;top:368px;font-size:12px;line-height:16px;font-weight:normal;color:#000;transform:scaleX(0.9063);">Diğer Tutar</span>
<span class="t" style="left:383.4px;top:396px;font-size:12px;line-height:16px;font-weight:normal;color:#000;transform:scaleX(0.9101);">Vergi Türü</span>
<span class="t" style="left:526.4px;top:396px;font-size:12px;line-height:16px;font-weight:normal;color:#000;transform:scaleX(0.9099);">Vergi Tutar</span>
<span class="t" style="left:390.8px;top:420px;font-size:12px;line-height:16px;font-weight:normal;color:#000;transform:scaleX(0.9625);">Ref. Tar.</span>
<span class="t" style="left:606.8px;top:422px;font-size:12px;line-height:16px;font-weight:normal;color:#000;transform:scaleX(0.9341);">Hava Yakıt</span>
<span class="t" style="left:389.4px;top:447px;font-size:14px;line-height:18px;font-weight:normal;color:#000;transform:scaleX(0.9464);">İş Planı</span>
<span class="t" style="left:351.8px;top:472px;font-size:14px;line-height:18px;font-weight:normal;color:#000;transform:scaleX(0.9792);">Say. Vergi No</span>
<span class="t" style="left:393.8px;top:497px;font-size:12px;line-height:16px;font-weight:normal;color:#000;transform:scaleX(0.8906);">E-ticaret</span>
<span class="t" style="left:376.9px;top:522px;font-size:12px;line-height:16px;font-weight:normal;color:#000;transform:scaleX(0.8793);">Sipariş Türü</span>
<span class="t" style="left:697.4px;top:107px;font-size:12px;line-height:16px;font-weight:normal;color:#000;transform:scaleX(0.8573);">A Çıkış Güm.</span>
<span class="t" style="left:706.8px;top:133px;font-size:12px;line-height:16px;font-weight:normal;color:#000;transform:scaleX(0.9245);">10 İlk Ülke</span>
<span class="t" style="left:695.8px;top:160px;font-size:12px;line-height:16px;font-weight:normal;color:#000;transform:scaleX(0.9354);">11 Tic.Ülkesi</span>
<span class="t" style="left:695.8px;top:185px;font-size:12px;line-height:16px;font-weight:normal;color:#000;transform:scaleX(0.8967);">15 Cik.Ulkesi</span>
<span class="t" style="left:698.8px;top:212px;font-size:12px;line-height:16px;font-weight:normal;color:#000;transform:scaleX(0.9056);">17 Gid. Ülke</span>
<span class="t" style="left:712.0px;top:238px;font-size:12px;line-height:16px;font-weight:normal;color:#000;transform:scaleX(0.9188);">28 Banka</span>
<span class="t" style="left:695.0px;top:263px;font-size:12px;line-height:16px;font-weight:normal;color:#000;transform:scaleX(0.8433);">29 Sınır Güm.</span>
<span class="t" style="left:697.8px;top:290px;font-size:12px;line-height:16px;font-weight:normal;color:#000;transform:scaleX(0.8850);">Ödeme Şekli</span>
<span class="t" style="left:700.0px;top:316px;font-size:12px;line-height:16px;font-weight:normal;color:#000;transform:scaleX(0.8992);">54 Bey.Sah.</span>
<span class="t" style="left:748.0px;top:342px;font-size:12px;line-height:16px;font-weight:normal;color:#000;transform:scaleX(0.8867);">Özet Beyan</span>
<span class="t" style="left:722.0px;top:368px;font-size:12px;line-height:16px;font-weight:normal;color:#000;transform:scaleX(0.8711);">İmalatçı</span>
<span class="t" style="left:703.8px;top:401px;font-size:12px;line-height:16px;font-weight:normal;color:#000;transform:scaleX(0.8842);">Ödeme</span>
<span class="t" style="left:777.8px;top:401px;font-size:12px;line-height:16px;font-weight:normal;color:#000;transform:scaleX(0.9448);">DV Yok</span>
<span class="t" style="left:857.4px;top:401px;font-size:12px;line-height:16px;font-weight:normal;color:#000;transform:scaleX(0.8808);">Parsiyel</span>
<span class="t" style="left:703.8px;top:422px;font-size:12px;line-height:16px;font-weight:normal;color:#000;transform:scaleX(0.9154);">Dökme</span>
<span class="t" style="left:777.8px;top:422px;font-size:12px;line-height:16px;font-weight:normal;color:#000;transform:scaleX(0.8768);">Mevzuatı Gösterme</span>
<span class="t" style="left:932.8px;top:422px;font-size:12px;line-height:16px;font-weight:normal;color:#000;transform:scaleX(0.8744);">Beyanname FOB Gönder</span>
<span class="t" style="left:21.9px;top:568px;font-size:14px;line-height:18px;font-weight:normal;color:#000;transform:scaleX(1.0894);">Temel</span>
<span class="t" style="left:79.2px;top:568px;font-size:14px;line-height:18px;font-weight:normal;color:#000;transform:scaleX(0.8492);">Evrak</span>
</body></html>
